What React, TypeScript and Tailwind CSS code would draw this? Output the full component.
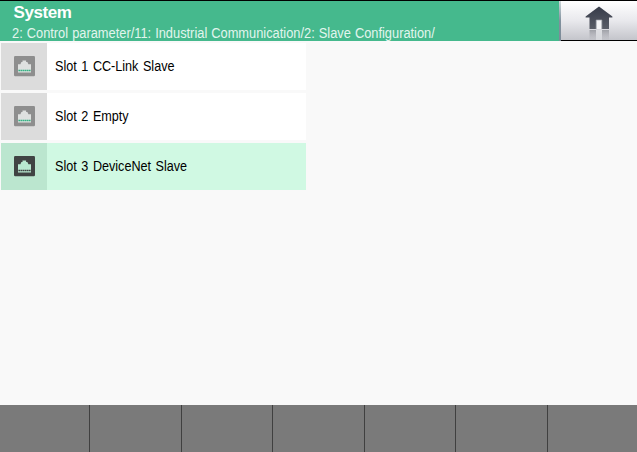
type Slot = { label: string; active?: boolean };

const slots: Slot[] = [
  { label: "Slot 1 CC-Link Slave" },
  { label: "Slot 2 Empty" },
  { label: "Slot 3 DeviceNet Slave", active: true },
];

function PortIcon({ active }: { active?: boolean }) {
  const body = active ? "#404343" : "#8e8e8e";
  const plug = active ? "#b8e8d0" : "#dfe1e0";
  const pins = active ? "#404343" : "#35b284";
  return (
    <svg width="22" height="22" viewBox="0 0 22 22">
      <rect x="0" y="0" width="21" height="20.3" rx="1.2" fill={body} />
      <path d="M4 16.4V8.2h2.4L7.4 6H8.5V4.4h3.6V6h1.3l1 2.2H17v8.2z" fill={plug} />
      <path d="M4.4 14.5h12.4" stroke={pins} strokeWidth="1.6" strokeDasharray="1.7 0.4" />
    </svg>
  );
}

function HomeIcon() {
  return (
    <svg width="30" height="36" viewBox="0 0 30 36">
      <defs>
        <linearGradient id="house" x1="0" y1="0" x2="0" y2="1">
          <stop offset="0" stopColor="#363b49" />
          <stop offset="1" stopColor="#5a5d67" />
        </linearGradient>
        <linearGradient id="reflection" x1="0" y1="0" x2="0" y2="1">
          <stop offset="0" stopColor="#8d8f96" stopOpacity="0.75" />
          <stop offset="1" stopColor="#a8a9b0" stopOpacity="0.1" />
        </linearGradient>
      </defs>
      <path d="M15 2.6 28.4 12.4V13.6H25V25H5.5V13.6H1.6V12.4z" fill="url(#house)" />
      <path d="M12.2 25V16h5.6v9" fill="#f4f4f6" stroke="#a4a7af" strokeWidth="0.7" />
      <path d="M5.5 26h6.5v10H5.5zM18 26h7v10h-7z" fill="url(#reflection)" />
      <path d="M12 26h6v10h-6z" fill="#e1e2e6" opacity="0.6" />
    </svg>
  );
}

export default function App() {
  return (
    <div className="flex h-[452px] w-[637px] flex-col overflow-hidden bg-[#f9f9f9] font-['Liberation_Sans',Arial,sans-serif]">
      <header className="flex h-[41px] shrink-0 border-t border-black bg-[#45b98d]">
        <div className="w-[559px] shrink-0 overflow-hidden whitespace-nowrap">
          <h1 className="h-6 pl-[13.5px] text-[17px] leading-6 font-bold tracking-[-0.4px] text-white">System</h1>
          <p className="h-4 pl-3 text-[14px] leading-4 text-[#e2f5ed]">
            <span className="inline-block origin-left scale-x-[0.917] [word-spacing:0.5px]">
              2: Control parameter/11: Industrial Communication/2: Slave Configuration/
            </span>
          </p>
        </div>
        <div className="w-0.5 shrink-0 bg-linear-to-b from-[#cfd9dc] via-[#80919d] to-[#7c8a98]" />
        <button
          aria-label="Home"
          className="flex flex-1 items-start justify-center border-b border-black bg-linear-to-b from-white via-[#e9e9ed] to-[#c4c5cb] pt-[3px]"
        >
          <HomeIcon />
        </button>
      </header>
      <main className="flex flex-1 flex-col gap-[3px] pt-0.5 pl-px">
        {slots.map((slot) => (
          <div
            key={slot.label}
            className={`flex h-[47px] w-[305px] ${slot.active ? "bg-[#d0f9e3]" : "bg-white"}`}
          >
            <div
              className={`flex w-[46px] items-center justify-center pt-px pl-0.5 ${slot.active ? "bg-[#bbe6cf]" : "bg-[#dcdcdc]"}`}
            >
              <PortIcon active={slot.active} />
            </div>
            <span className="ml-2 origin-left scale-x-[0.9] text-[14px] leading-[47px] whitespace-nowrap text-black [word-spacing:1.2px]">
              {slot.label}
            </span>
          </div>
        ))}
      </main>
      <footer className="grid h-[47px] shrink-0 grid-cols-[90px_92px_91px_92px_91px_92px_89px] bg-[#7a7a7a]">
        {[0, 1, 2, 3, 4, 5].map((key) => (
          <div key={key} className="border-r border-[#404040]" />
        ))}
        <div />
      </footer>
    </div>
  );
}
